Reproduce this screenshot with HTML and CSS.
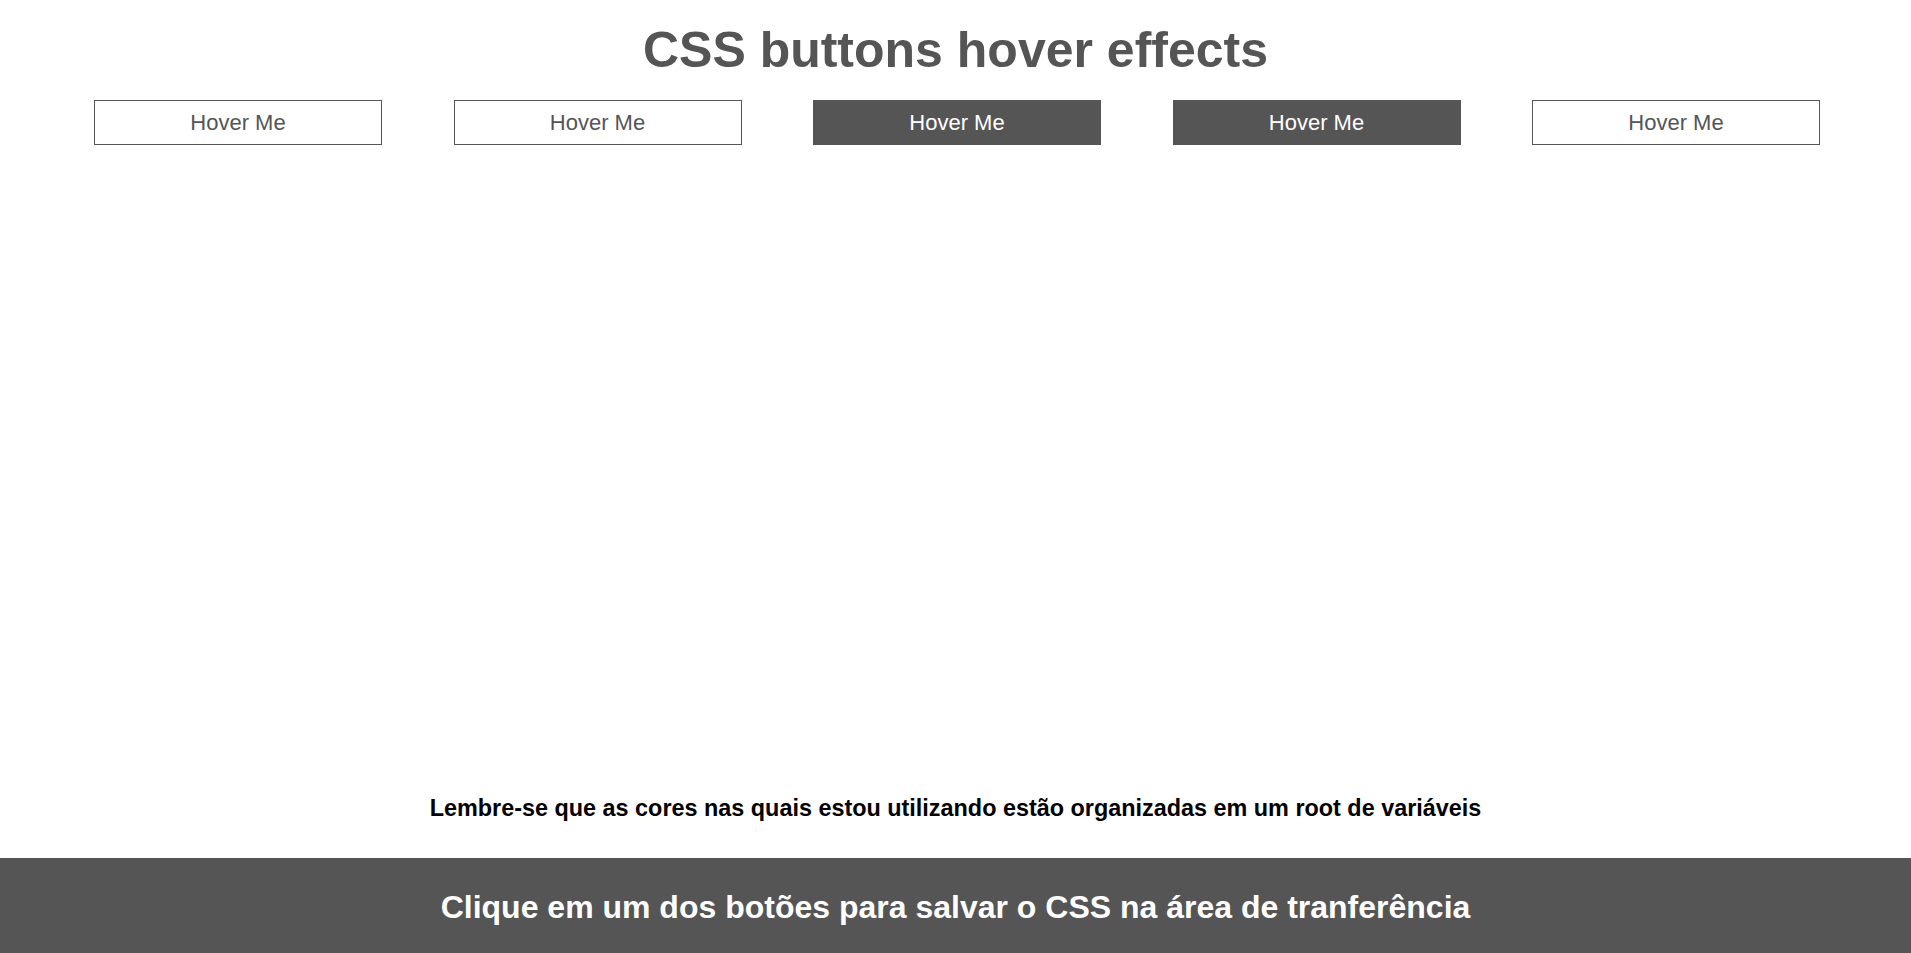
FILE: index.html
```html
<!DOCTYPE html>
<html lang="pt-BR">
<head>
<meta charset="utf-8">
<title>CSS buttons hover effects</title>
<link rel="stylesheet" href="styles.css">
</head>
<body>
  <h1 class="title">CSS buttons hover effects</h1>
  <div class="buttons">
    <button class="btn btn-outline">Hover Me</button>
    <button class="btn btn-outline">Hover Me</button>
    <button class="btn btn-filled">Hover Me</button>
    <button class="btn btn-filled">Hover Me</button>
    <button class="btn btn-outline">Hover Me</button>
  </div>
  <div class="spacer"></div>
  <p class="note">Lembre-se que as cores nas quais estou utilizando estão organizadas em um root de variáveis</p>
  <footer class="footer">Clique em um dos botões para salvar o CSS na área de tranferência</footer>
</body>
</html>
```

FILE: styles.css
```css
:root {
  --main: #555555;
  --light: #ffffff;
}

html, body {
  margin: 0;
  padding: 0;
}

body {
  height: 100vh;
  display: flex;
  flex-direction: column;
  font-family: "Liberation Sans", Arial, sans-serif;
  background: var(--light);
}

.title {
  margin: 22px 0 0;
  font-size: 50px;
  font-weight: bold;
  color: var(--main);
  text-align: center;
  line-height: 57px;
}

.buttons {
  margin-top: 21px;
  padding-left: 3px;
  display: flex;
  justify-content: center;
  gap: 71.5px;
}

.btn {
  width: 288px;
  height: 45px;
  box-sizing: border-box;
  border: 1px solid var(--main);
  font-family: "Liberation Sans", Arial, sans-serif;
  font-size: 22px;
  padding: 0;
  cursor: pointer;
}

.btn-outline {
  background: var(--light);
  color: var(--main);
}

.btn-filled {
  background: var(--main);
  color: var(--light);
}

.spacer {
  flex: 1;
}

.note {
  margin: 0 0 36px;
  text-align: center;
  font-size: 23.4px;
  font-weight: bold;
  color: #000;
}

.footer {
  height: 95px;
  box-sizing: border-box;
  padding-top: 4px;
  display: flex;
  align-items: center;
  justify-content: center;
  background: var(--main);
  color: var(--light);
  font-size: 32px;
  font-weight: bold;
}
```
